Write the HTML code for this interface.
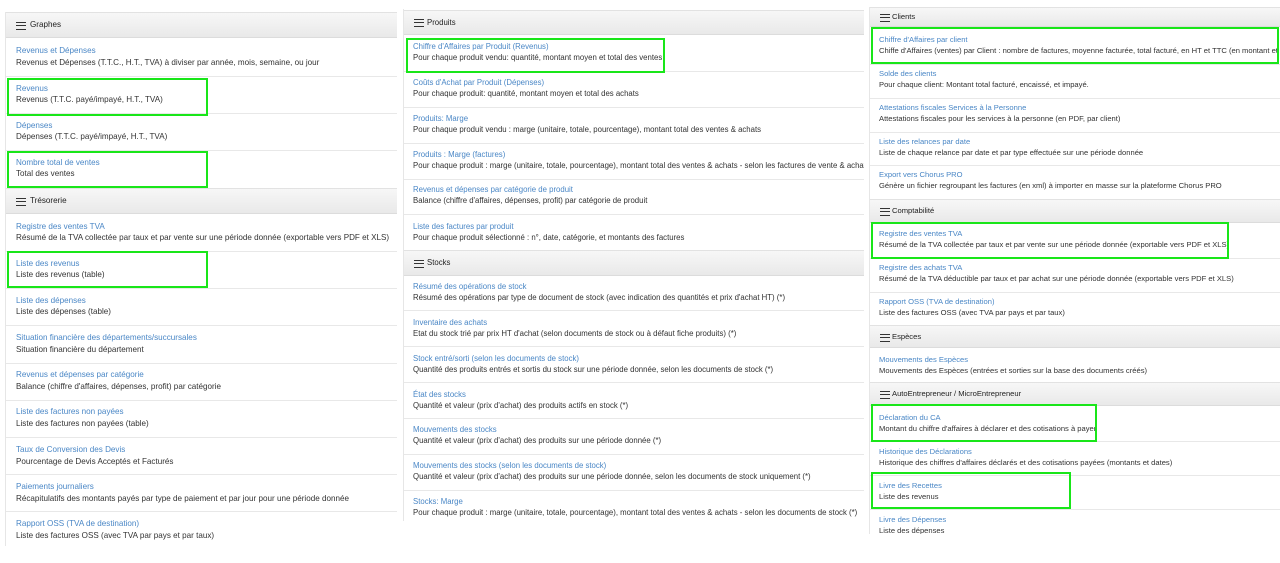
<!DOCTYPE html>
<html><head><meta charset="utf-8"><style>
*{margin:0;padding:0;box-sizing:border-box}
body{width:1280px;height:563px;background:#fff;position:relative;overflow:hidden;font-family:"Liberation Sans",Arial,sans-serif}
.p{position:absolute;overflow:hidden;background:#fff;border-left:1px solid #e6e6e6}
.a{position:absolute;white-space:nowrap;line-height:12px}
.l{color:#4a87c6}
.d{color:#333}
.h{position:absolute;left:0;right:0;background:linear-gradient(#f7f7f7,#e9e9e9);border-top:1px solid #e2e2e2;border-bottom:1px solid #dcdcdc}
.h span{position:absolute;white-space:nowrap;color:#222}
.h i{position:absolute;width:10px;height:8px;border-top:1.5px solid #333;border-bottom:1.5px solid #333}
.h i:after{content:"";position:absolute;left:0;right:0;top:1.75px;border-top:1.5px solid #333}
.s{position:absolute;left:0;right:0;height:1px;background:#e8e8e8}
.g{position:absolute;border:2px solid #19e619}
#L{font-size:8.1px}#M{font-size:7.8px}#R{font-size:7.6px}
#L .a{left:10px}#M .a{left:9px}#R .a{left:9px}
</style></head><body>

<!-- LEFT -->
<div class="p" id="L" style="left:5px;top:12px;width:392px;height:534px">
<div class="h" style="top:0;height:26px"><i style="left:10px;top:9px"></i><span style="left:24px;top:7px">Graphes</span></div>
<div class="a l" style="top:33px">Revenus et Dépenses</div><div class="a d" style="top:45px">Revenus et Dépenses (T.T.C., H.T., TVA) à diviser par année, mois, semaine, ou jour</div>
<div class="s" style="top:64px"></div>
<div class="a l" style="top:71px">Revenus</div><div class="a d" style="top:82px">Revenus (T.T.C. payé/impayé, H.T., TVA)</div>
<div class="s" style="top:101px"></div>
<div class="a l" style="top:108px">Dépenses</div><div class="a d" style="top:119px">Dépenses (T.T.C. payé/impayé, H.T., TVA)</div>
<div class="s" style="top:138px"></div>
<div class="a l" style="top:145px">Nombre total de ventes</div><div class="a d" style="top:156px">Total des ventes</div>
<div class="h" style="top:176px;height:26px"><i style="left:10px;top:9px"></i><span style="left:24px;top:7px">Trésorerie</span></div>
<div class="a l" style="top:209px">Registre des ventes TVA</div><div class="a d" style="top:220px">Résumé de la TVA collectée par taux et par vente sur une période donnée (exportable vers PDF et XLS)</div>
<div class="s" style="top:239px"></div>
<div class="a l" style="top:246px">Liste des revenus</div><div class="a d" style="top:257px">Liste des revenus (table)</div>
<div class="s" style="top:276px"></div>
<div class="a l" style="top:283px">Liste des dépenses</div><div class="a d" style="top:294px">Liste des dépenses (table)</div>
<div class="s" style="top:313px"></div>
<div class="a l" style="top:320px">Situation financière des départements/succursales</div><div class="a d" style="top:332px">Situation financière du département</div>
<div class="s" style="top:351px"></div>
<div class="a l" style="top:357px">Revenus et dépenses par catégorie</div><div class="a d" style="top:369px">Balance (chiffre d'affaires, dépenses, profit) par catégorie</div>
<div class="s" style="top:388px"></div>
<div class="a l" style="top:394px">Liste des factures non payées</div><div class="a d" style="top:406px">Liste des factures non payées (table)</div>
<div class="s" style="top:425px"></div>
<div class="a l" style="top:432px">Taux de Conversion des Devis</div><div class="a d" style="top:444px">Pourcentage de Devis Acceptés et Facturés</div>
<div class="s" style="top:462px"></div>
<div class="a l" style="top:469px">Paiements journaliers</div><div class="a d" style="top:481px">Récapitulatifs des montants payés par type de paiement et par jour pour une période donnée</div>
<div class="s" style="top:499px"></div>
<div class="a l" style="top:506px">Rapport OSS (TVA de destination)</div><div class="a d" style="top:518px">Liste des factures OSS (avec TVA par pays et par taux)</div>
</div>

<!-- MIDDLE -->
<div class="p" id="M" style="left:403px;top:9px;width:461px;height:512px">
<div class="h" style="top:1px;height:25px"><i style="left:10px;top:8px"></i><span style="left:23px;top:7px">Produits</span></div>
<div class="a l" style="top:32px">Chiffre d'Affaires par Produit (Revenus)</div><div class="a d" style="top:43px">Pour chaque produit vendu: quantité, montant moyen et total des ventes</div>
<div class="s" style="top:62px"></div>
<div class="a l" style="top:68px">Coûts d'Achat par Produit (Dépenses)</div><div class="a d" style="top:79px">Pour chaque produit: quantité, montant moyen et total des achats</div>
<div class="s" style="top:98px"></div>
<div class="a l" style="top:104px">Produits: Marge</div><div class="a d" style="top:115px">Pour chaque produit vendu : marge (unitaire, totale, pourcentage), montant total des ventes &amp; achats</div>
<div class="s" style="top:134px"></div>
<div class="a l" style="top:140px">Produits : Marge (factures)</div><div class="a d" style="top:151px">Pour chaque produit : marge (unitaire, totale, pourcentage), montant total des ventes &amp; achats - selon les factures de vente &amp; achat</div>
<div class="s" style="top:170px"></div>
<div class="a l" style="top:175px">Revenus et dépenses par catégorie de produit</div><div class="a d" style="top:186px">Balance (chiffre d'affaires, dépenses, profit) par catégorie de produit</div>
<div class="s" style="top:205px"></div>
<div class="a l" style="top:212px">Liste des factures par produit</div><div class="a d" style="top:223px">Pour chaque produit sélectionné : n°, date, catégorie, et montants des factures</div>
<div class="h" style="top:241px;height:26px"><i style="left:10px;top:9px"></i><span style="left:23px;top:7px">Stocks</span></div>
<div class="a l" style="top:272px">Résumé des opérations de stock</div><div class="a d" style="top:283px">Résumé des opérations par type de document de stock (avec indication des quantités et prix d'achat HT) (*)</div>
<div class="s" style="top:301px"></div>
<div class="a l" style="top:308px">Inventaire des achats</div><div class="a d" style="top:319px">Etat du stock trié par prix HT d'achat (selon documents de stock ou à défaut fiche produits) (*)</div>
<div class="s" style="top:337px"></div>
<div class="a l" style="top:344px">Stock entré/sorti (selon les documents de stock)</div><div class="a d" style="top:355px">Quantité des produits entrés et sortis du stock sur une période donnée, selon les documents de stock (*)</div>
<div class="s" style="top:373px"></div>
<div class="a l" style="top:380px">État des stocks</div><div class="a d" style="top:391px">Quantité et valeur (prix d'achat) des produits actifs en stock (*)</div>
<div class="s" style="top:409px"></div>
<div class="a l" style="top:415px">Mouvements des stocks</div><div class="a d" style="top:426px">Quantité et valeur (prix d'achat) des produits sur une période donnée (*)</div>
<div class="s" style="top:445px"></div>
<div class="a l" style="top:451px">Mouvements des stocks (selon les documents de stock)</div><div class="a d" style="top:462px">Quantité et valeur (prix d'achat) des produits sur une période donnée, selon les documents de stock uniquement (*)</div>
<div class="s" style="top:481px"></div>
<div class="a l" style="top:487px">Stocks: Marge</div><div class="a d" style="top:498px">Pour chaque produit : marge (unitaire, totale, pourcentage), montant total des ventes &amp; achats - selon les documents de stock (*)</div>
</div>

<!-- RIGHT -->
<div class="p" id="R" style="left:869px;top:7px;width:411px;height:527px">
<div class="h" style="top:0;height:20px"><i style="left:10px;top:6px"></i><span style="left:22px;top:4px">Clients</span></div>
<div class="a l" style="top:27px">Chiffre d'Affaires par client</div><div class="a d" style="top:38px">Chiffe d'Affaires (ventes) par Client : nombre de factures, moyenne facturée, total facturé, en HT et TTC (en montant et %)</div>
<div class="s" style="top:57px"></div>
<div class="a l" style="top:61px">Solde des clients</div><div class="a d" style="top:72px">Pour chaque client: Montant total facturé, encaissé, et impayé.</div>
<div class="s" style="top:91px"></div>
<div class="a l" style="top:95px">Attestations fiscales Services à la Personne</div><div class="a d" style="top:106px">Attestations fiscales pour les services à la personne (en PDF, par client)</div>
<div class="s" style="top:125px"></div>
<div class="a l" style="top:129px">Liste des relances par date</div><div class="a d" style="top:140px">Liste de chaque relance par date et par type effectuée sur une période donnée</div>
<div class="s" style="top:158px"></div>
<div class="a l" style="top:162px">Export vers Chorus PRO</div><div class="a d" style="top:173px">Génère un fichier regroupant les factures (en xml) à importer en masse sur la plateforme Chorus PRO</div>
<div class="h" style="top:192px;height:24px"><i style="left:10px;top:8px"></i><span style="left:22px;top:6px">Comptabilité</span></div>
<div class="a l" style="top:221px">Registre des ventes TVA</div><div class="a d" style="top:232px">Résumé de la TVA collectée par taux et par vente sur une période donnée (exportable vers PDF et XLS)</div>
<div class="s" style="top:251px"></div>
<div class="a l" style="top:255px">Registre des achats TVA</div><div class="a d" style="top:266px">Résumé de la TVA déductible par taux et par achat sur une période donnée (exportable vers PDF et XLS)</div>
<div class="s" style="top:285px"></div>
<div class="a l" style="top:289px">Rapport OSS (TVA de destination)</div><div class="a d" style="top:300px">Liste des factures OSS (avec TVA par pays et par taux)</div>
<div class="h" style="top:318px;height:23px"><i style="left:10px;top:8px"></i><span style="left:22px;top:6px">Espèces</span></div>
<div class="a l" style="top:347px">Mouvements des Espèces</div><div class="a d" style="top:358px">Mouvements des Espèces (entrées et sorties sur la base des documents créés)</div>
<div class="h" style="top:375px;height:24px"><i style="left:10px;top:8px"></i><span style="left:22px;top:6px">AutoEntrepreneur / MicroEntrepreneur</span></div>
<div class="a l" style="top:405px">Déclaration du CA</div><div class="a d" style="top:416px">Montant du chiffre d'affaires à déclarer et des cotisations à payer</div>
<div class="s" style="top:434px"></div>
<div class="a l" style="top:439px">Historique des Déclarations</div><div class="a d" style="top:450px">Historique des chiffres d'affaires déclarés et des cotisations payées (montants et dates)</div>
<div class="s" style="top:468px"></div>
<div class="a l" style="top:473px">Livre des Recettes</div><div class="a d" style="top:484px">Liste des revenus</div>
<div class="s" style="top:502px"></div>
<div class="a l" style="top:507px">Livre des Dépenses</div><div class="a d" style="top:518px">Liste des dépenses</div>
</div>

<!-- green highlight boxes -->
<div class="g" style="left:7px;top:78px;width:201px;height:38px"></div>
<div class="g" style="left:7px;top:151px;width:201px;height:37px"></div>
<div class="g" style="left:7px;top:251px;width:201px;height:37px"></div>
<div class="g" style="left:406px;top:38px;width:259px;height:35px"></div>
<div class="g" style="left:871px;top:27px;width:408px;height:37px"></div>
<div class="g" style="left:871px;top:222px;width:358px;height:37px"></div>
<div class="g" style="left:871px;top:404px;width:226px;height:38px"></div>
<div class="g" style="left:871px;top:472px;width:200px;height:37px"></div>
</body></html>
